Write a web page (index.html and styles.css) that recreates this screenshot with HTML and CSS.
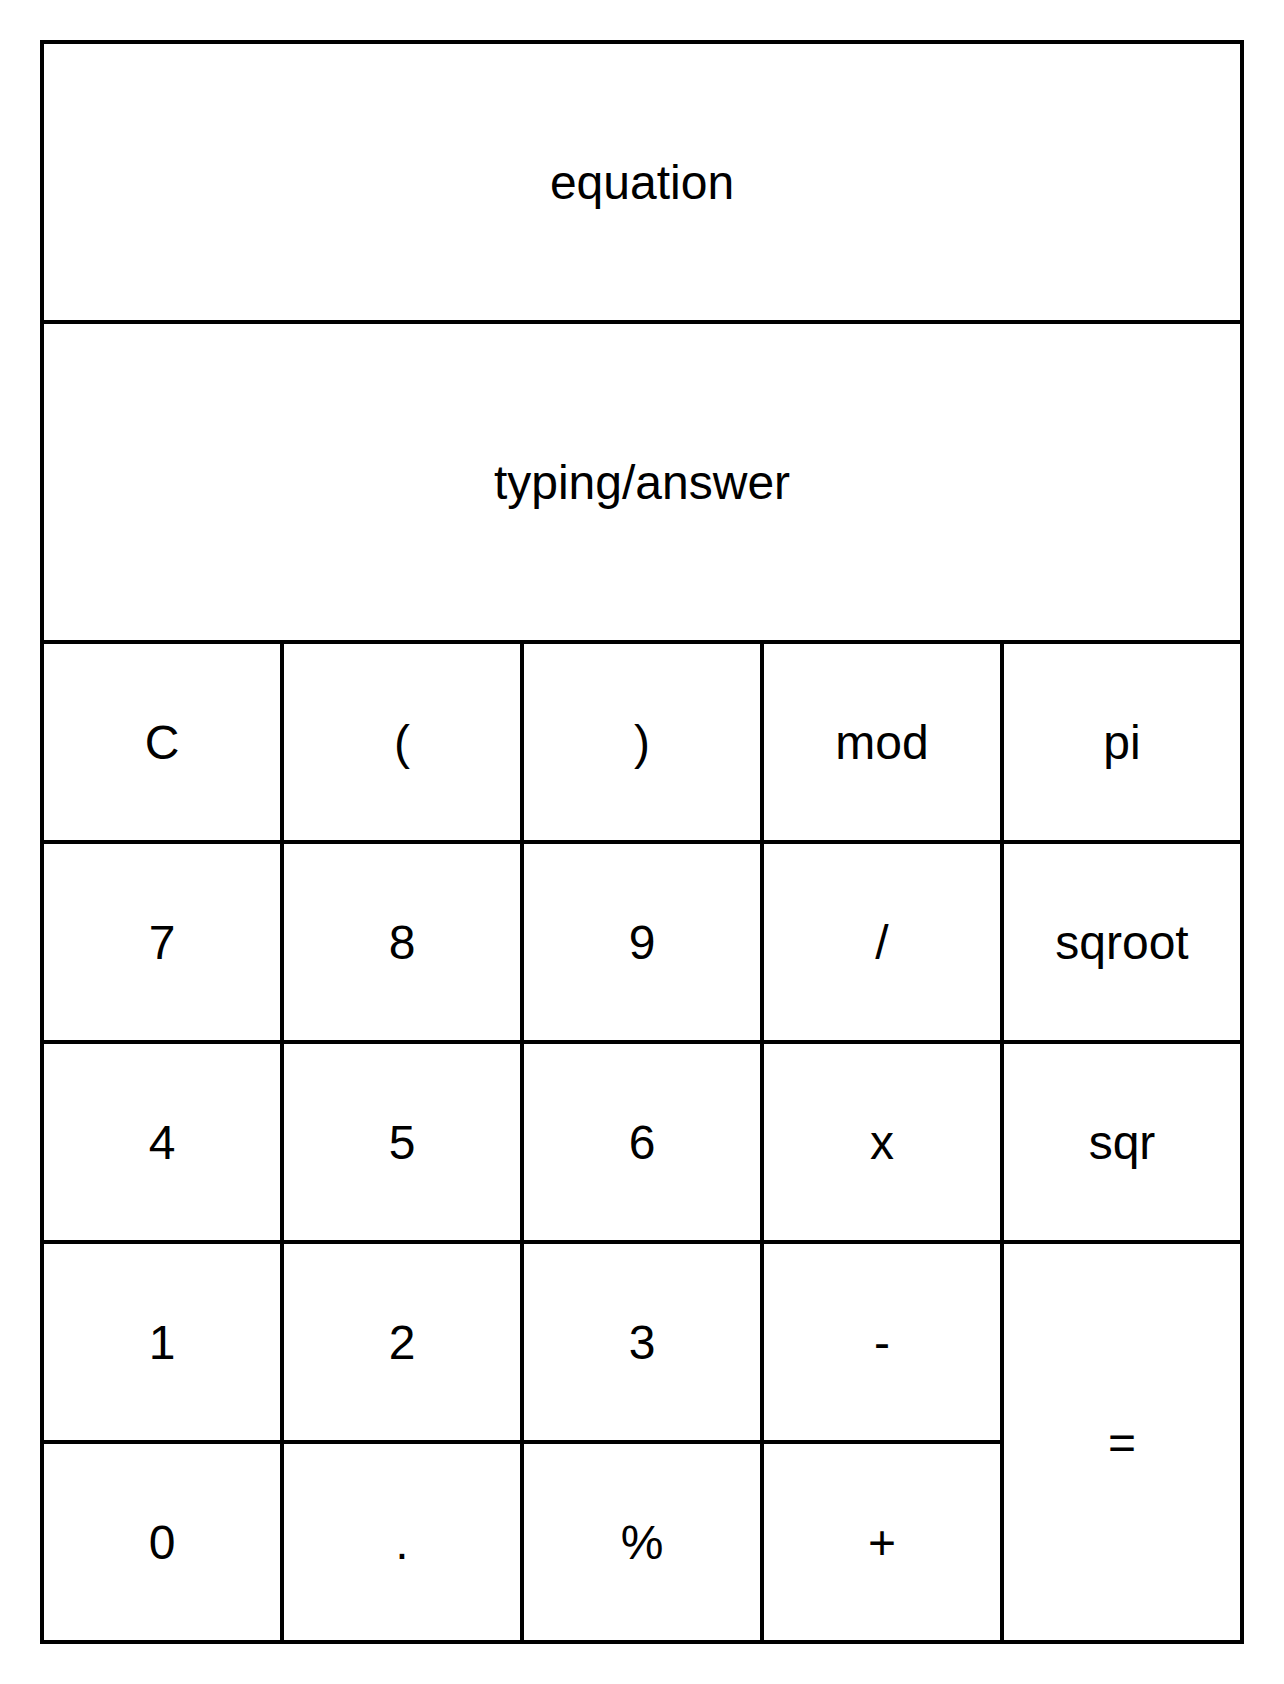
FILE: index.html
```html
<!DOCTYPE html>
<html>
<head>
<meta charset="utf-8">
<link rel="stylesheet" href="styles.css">
</head>
<body>
<div class="calc">
  <div class="cell display eq">equation</div>
  <div class="cell display ans">typing/answer</div>
  <div class="cell">C</div>
  <div class="cell">(</div>
  <div class="cell">)</div>
  <div class="cell">mod</div>
  <div class="cell">pi</div>
  <div class="cell">7</div>
  <div class="cell">8</div>
  <div class="cell">9</div>
  <div class="cell">/</div>
  <div class="cell">sqroot</div>
  <div class="cell">4</div>
  <div class="cell">5</div>
  <div class="cell">6</div>
  <div class="cell">x</div>
  <div class="cell">sqr</div>
  <div class="cell">1</div>
  <div class="cell">2</div>
  <div class="cell">3</div>
  <div class="cell">-</div>
  <div class="cell equals">=</div>
  <div class="cell">0</div>
  <div class="cell">.</div>
  <div class="cell">%</div>
  <div class="cell">+</div>
</div>
</body>
</html>
```
FILE: styles.css
```css
html, body {
  margin: 0;
  padding: 0;
  background: #fff;
}
body {
  padding: 40px;
  font-family: "Liberation Sans", Arial, sans-serif;
}
.calc {
  width: 1204px;
  box-sizing: border-box;
  display: grid;
  grid-template-columns: repeat(5, 236px);
  grid-template-rows: 276px 316px repeat(5, 196px);
  gap: 4px;
  padding: 4px;
  background: #000;
}
.cell {
  background: #fff;
  color: #000;
  font-size: 48px;
  display: flex;
  align-items: center;
  justify-content: center;
}
.display {
  grid-column: 1 / 6;
}
.equals {
  grid-column: 5;
  grid-row: 6 / 8;
}
```
